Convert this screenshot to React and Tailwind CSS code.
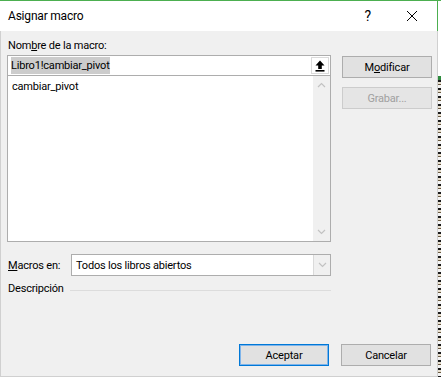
import React from 'react'

const font = { fontFamily: 'Roboto, "Noto Sans", sans-serif' }

function Btn({ children, primary = false, disabled = false }) {
  return (
    <div
      className={`flex h-[22px] w-[90px] items-center justify-center border text-[11px] tracking-[-0.2px] ${
        primary
          ? 'border-[#0078d7] bg-[#e1e1e1] text-black shadow-[inset_0_0_0_1px_#7eb4ea]'
          : disabled
          ? 'border-[#cccccc] bg-[#e5e5e5] text-[#a0a0a0]'
          : 'border-[#adadad] bg-[#e1e1e1] text-black'
      }`}
    >
      {children}
    </div>
  )
}

function Chevron({ up }) {
  return (
    <svg width="9" height="6" viewBox="0 0 9 6" fill="none">
      <path
        d={up ? 'M1 5 L4.5 1.5 L8 5' : 'M1 1 L4.5 4.5 L8 1'}
        stroke="#c2c2c2"
        strokeWidth="1.2"
      />
    </svg>
  )
}

export default function App() {
  return (
    <div className="flex h-[377px] w-[441px] overflow-hidden bg-white leading-none" style={font}>
      {/* dialog */}
      <div className="flex h-full w-[438px] flex-col border-t border-[#4caf50] bg-[#f0f0f0]">
        {/* title bar */}
        <div className="flex h-[30px] items-center border-r border-[#4caf50] bg-white">
          <span className="ml-[8px] text-[12px] tracking-[-0.2px] text-black">Asignar macro</span>
          <span className="ml-auto mr-[35px] text-[14px] text-black">?</span>
          <svg width="12" height="12" viewBox="0 0 12 12" className="mr-[19px]">
            <path d="M1 1 L11 11 M11 1 L1 11" stroke="#000" strokeWidth="1" />
          </svg>
        </div>

        {/* body */}
        <div className="flex flex-1 flex-col border-r border-b border-l border-[#d0d0d0] pl-[6px] text-[11px] tracking-[-0.2px] text-black">
          <div className="mt-[8px] flex">
            {/* left column */}
            <div className="w-[324px]">
              <div className="ml-[1px] h-[16px] leading-[14px]">
                Nom<span className="underline">b</span>re de la macro:
              </div>
              <div className="flex h-[21px] items-center border border-[#adadad] bg-white">
                <span className="ml-[3px] bg-[#cccccc] leading-[17px]">Libro1!cambiar_pivot</span>
                <div className="ml-auto mr-[1px] flex h-[17px] w-[18px] items-center justify-center border border-[#dadada] bg-white">
                  <svg width="10" height="12" viewBox="0 0 10 12">
                    <path d="M5 0.5 L9.5 5.5 L6.8 5.5 L6.8 9 L3.2 9 L3.2 5.5 L0.5 5.5 Z" fill="#000" />
                    <rect x="0.5" y="10" width="9" height="1.6" fill="#000" />
                  </svg>
                </div>
              </div>
              <div className="flex h-[166px] border border-t-0 border-[#adadad] bg-white">
                <div className="flex-1 pl-[4px] pt-[4px] leading-[14px]">cambiar_pivot</div>
                <div className="flex w-[17px] flex-col items-center justify-between bg-[#f0f0f0] py-[6px]">
                  <Chevron up />
                  <Chevron />
                </div>
              </div>
            </div>
            {/* right column */}
            <div className="ml-[11px] flex flex-col gap-[9px] pt-[17px]">
              <Btn>
                M<span className="underline">o</span>dificar
              </Btn>
              <Btn disabled>Grabar...</Btn>
            </div>
          </div>

          {/* macros en */}
          <div className="mt-[12px] flex w-[324px] items-center">
            <span className="ml-[1px] w-[63px]">
              <span className="underline">M</span>acros en:
            </span>
            <div className="flex h-[22px] flex-1 items-center border border-[#adadad] bg-white">
              <span className="ml-[4px]">Todos los libros abiertos</span>
              <div className="ml-auto flex h-full w-[17px] items-center justify-center border-l border-[#dadada] bg-[#f0f0f0]">
                <Chevron />
              </div>
            </div>
          </div>

          {/* descripcion */}
          <div className="mt-[6px] flex w-[324px] items-center">
            <span className="ml-[1px] h-[16px] leading-[14px]">Descripción</span>
            <div className="ml-[6px] h-px flex-1 bg-[#dcdcdc]" />
          </div>

          {/* bottom buttons */}
          <div className="mt-auto mb-[10px] flex justify-end pr-[6px]">
            <Btn primary>Aceptar</Btn>
            <div className="w-[12px]" />
            <Btn>Cancelar</Btn>
          </div>
        </div>
      </div>
      {/* excel behind */}
      <div className="flex w-[3px] flex-col">
        <div className="h-[76px] border-t border-[#4caf50] bg-white" />
        <div className="h-[4px] bg-[#2e8b3e]" />
        <div className="flex-1 bg-[repeating-linear-gradient(180deg,#1a1a1a_0px,#1a1a1a_2px,#e8e0d0_2px,#e8e0d0_4px,#6a5a40_4px,#6a5a40_5px,#f4f4f4_5px,#f4f4f4_8px)]" />
      </div>
    </div>
  )
}
